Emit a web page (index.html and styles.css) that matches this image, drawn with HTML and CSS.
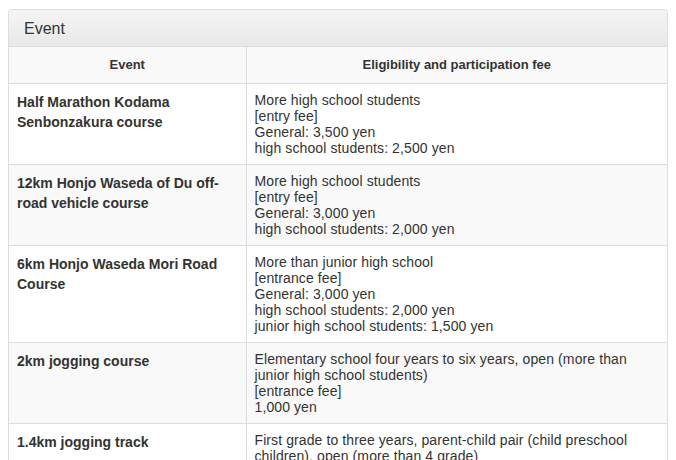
FILE: index.html
```html
<!DOCTYPE html>
<html lang="en">
<head>
<meta charset="utf-8">
<link rel="stylesheet" href="styles.css">
</head>
<body>
<div class="page">
  <div class="panel">
    <div class="panel-heading">Event</div>
    <table class="events">
      <colgroup><col class="c1"><col class="c2"></colgroup>
      <tr class="head">
        <th>Event</th>
        <th>Eligibility and participation fee</th>
      </tr>
      <tr>
        <td class="name">Half Marathon Kodama Senbonzakura course</td>
        <td class="info">More high school students<br>[entry fee]<br>General: 3,500 yen<br>high school students: 2,500 yen</td>
      </tr>
      <tr>
        <td class="name">12km Honjo Waseda of Du off-road vehicle course</td>
        <td class="info">More high school students<br>[entry fee]<br>General: 3,000 yen<br>high school students: 2,000 yen</td>
      </tr>
      <tr>
        <td class="name">6km Honjo Waseda Mori Road Course</td>
        <td class="info">More than junior high school<br>[entrance fee]<br>General: 3,000 yen<br>high school students: 2,000 yen<br>junior high school students: 1,500 yen</td>
      </tr>
      <tr>
        <td class="name">2km jogging course</td>
        <td class="info">Elementary school four years to six years, open (more than junior high school students)<br>[entrance fee]<br>1,000 yen</td>
      </tr>
      <tr>
        <td class="name">1.4km jogging track</td>
        <td class="info">First grade to three years, parent-child pair (child preschool children), open (more than 4 grade)<br>[entrance fee]<br>Parent and child: 1,500 yen<br>1,000 yen</td>
      </tr>
    </table>
  </div>
</div>
</body>
</html>
```

FILE: styles.css
```css
html, body {
  margin: 0;
  padding: 0;
  background: #fff;
}
body {
  font-family: "Liberation Sans", Arial, sans-serif;
  color: #333;
}
.page {
  padding: 9px 8px 0 8px;
}
.panel {
  border: 1px solid #ddd;
  border-radius: 4px;
  overflow: hidden;
  background: #fff;
}
.panel-heading {
  background: linear-gradient(to bottom, #f5f5f5 0%, #e8e8e8 100%);
  border-bottom: 1px solid #ddd;
  padding: 10px 15px 9px 15px;
  font-size: 16px;
  line-height: 17px;
  color: #333;
}
.events {
  width: 100%;
  border-collapse: collapse;
  table-layout: fixed;
}
.events .c1 { width: 237px; }
.events th, .events td {
  border-top: 1px solid #ddd;
  border-left: 1px solid #ddd;
  padding: 8px;
  vertical-align: top;
  text-align: left;
}
.events tr > :first-child { border-left: 0; }
.events tr.head th {
  border-top: 0;
  font-size: 13px;
  line-height: 20px;
  font-weight: bold;
  text-align: center;
}
.events tr:nth-child(odd) { background: #f9f9f9; }
.events tr:nth-child(even) { background: #fff; }
.events td.name {
  font-size: 14px;
  line-height: 20px;
  font-weight: bold;
}
.events td.info {
  font-size: 14px;
  line-height: 16px;
  letter-spacing: 0.1px;
}
```
